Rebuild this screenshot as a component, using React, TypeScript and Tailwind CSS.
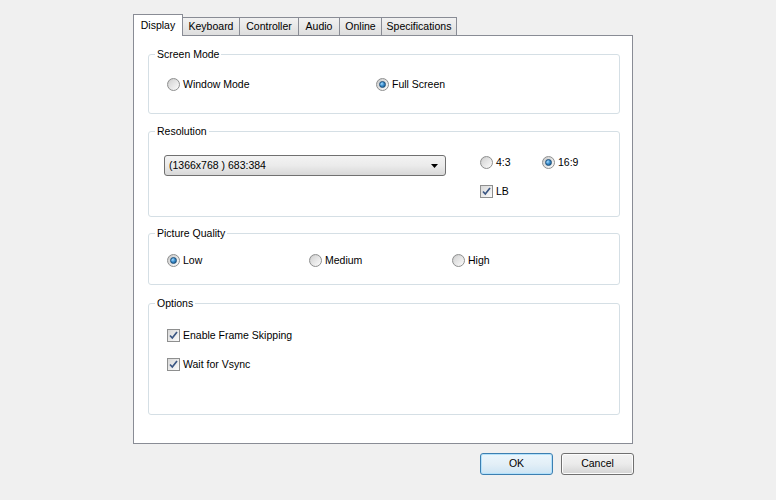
import React from "react";

const font = { fontFamily: '"Liberation Sans", Arial, sans-serif' };

function Radio({ checked }: { checked?: boolean }) {
  return (
    <span className="flex h-[13px] w-[13px] shrink-0 items-center justify-center rounded-full border border-[#8e8f8f] bg-gradient-to-br from-[#c8c8c8] to-[#ffffff]">
      {checked ? (
        <span className="h-[7px] w-[7px] rounded-full border border-[#1c4f7a] bg-[radial-gradient(circle_at_35%_35%,#a6dcff_0%,#3c8fcf_45%,#0f4c7c_100%)]" />
      ) : (
        <span className="h-[9px] w-[9px] rounded-full bg-gradient-to-br from-[#d4d4d4] to-[#f8f8f8]" />
      )}
    </span>
  );
}

function Check({ checked }: { checked?: boolean }) {
  return (
    <span className="flex h-[13px] w-[13px] shrink-0 items-center justify-center border border-[#8e8f8f] bg-white">
      <span className="relative flex h-[11px] w-[11px] items-center justify-center bg-gradient-to-br from-[#d8d8d8] to-[#fbfbfb]">
        {checked && (
          <svg width="9" height="9" viewBox="0 0 9 9" className="absolute left-[1px] top-[1px]">
            <path d="M1 4.5 L3.3 7 L8 1" fill="none" stroke="#3a5683" strokeWidth="1.7" />
          </svg>
        )}
      </span>
    </span>
  );
}

function Opt({ children, w, check, checked }: { children: React.ReactNode; w?: string; check?: boolean; checked?: boolean }) {
  return (
    <div className={`flex h-[16px] items-center gap-[3px] ${w ?? ""}`}>
      {check ? <Check checked={checked} /> : <Radio checked={checked} />}
      <span className="leading-none">{children}</span>
    </div>
  );
}

function Group({ title, className, children }: { title: string; className: string; children: React.ReactNode }) {
  return (
    <div className={`relative rounded-[3px] border border-[#d5dfe5] ${className}`}>
      <span className="absolute left-[6px] top-[-8px] bg-white px-[2px] leading-[14px]">{title}</span>
      {children}
    </div>
  );
}

const tabs = [
  { label: "Keyboard", w: "w-[57px]" },
  { label: "Controller", w: "w-[60px]" },
  { label: "Audio", w: "w-[42px]" },
  { label: "Online", w: "w-[43px]" },
  { label: "Specifications", w: "w-[76px]" },
];

export default function App() {
  return (
    <div className="h-[500px] w-[776px] bg-[#f0f0f0] pl-[133px] pt-[14px] text-[10.5px] text-black" style={font}>
      <div className="w-[501px]">
        <div className="relative z-10 -mb-px flex items-end">
          <div className="flex h-[22px] w-[50px] items-start justify-center border border-b-0 border-[#898c95] bg-white pt-[3px]">
            Display
          </div>
          {tabs.map((t, i) => (
            <div
              key={t.label}
              className={`flex h-[19px] ${t.w} items-center justify-center border border-[#898c95] bg-gradient-to-b from-[#f2f2f2] to-[#dedede] ${i === 0 ? "border-l-0" : "-ml-px"}`}
            >
              {t.label}
            </div>
          ))}
        </div>
        <div className="h-[409px] w-[500px] border border-[#898c95] bg-white pl-[14px] pr-[12px] pt-[18px]">
          <Group title="Screen Mode" className="h-[60px] pl-[18px] pt-[21px]">
            <div className="flex">
              <Opt w="w-[209px]">Window Mode</Opt>
              <Opt checked>Full Screen</Opt>
            </div>
          </Group>
          <Group title="Resolution" className="mt-[17px] h-[86px] pl-[15px] pt-[23px]">
            <div className="flex">
              <div className="flex h-[21px] w-[282px] items-center justify-between rounded-[3px] border border-[#707070] bg-gradient-to-b from-[#f3f3f3] via-[#ebebeb] to-[#d8d8d8] pl-[4px] pr-[7px]">
                <span>(1366x768 ) 683:384</span>
                <svg width="7" height="4" viewBox="0 0 7 4">
                  <path d="M0 0 H7 L3.5 4 Z" fill="#000" />
                </svg>
              </div>
              <div className="ml-[34px] flex flex-col gap-[13px]">
                <div className="-mt-[1px] flex">
                  <Opt w="w-[62px]">4:3</Opt>
                  <Opt checked>16:9</Opt>
                </div>
                <Opt check checked>LB</Opt>
              </div>
            </div>
          </Group>
          <Group title="Picture Quality" className="mt-[16px] h-[52px] pl-[18px] pt-[18px]">
            <div className="flex">
              <Opt w="w-[142px]" checked>Low</Opt>
              <Opt w="w-[143px]">Medium</Opt>
              <Opt>High</Opt>
            </div>
          </Group>
          <Group title="Options" className="mt-[18px] h-[112px] pl-[18px] pt-[23px]">
            <div className="flex flex-col gap-[13px]">
              <Opt check checked>Enable Frame Skipping</Opt>
              <Opt check checked>Wait for Vsync</Opt>
            </div>
          </Group>
        </div>
        <div className="mt-[9px] flex justify-end gap-[8px]">
          <button className="flex h-[22px] w-[73px] items-center justify-center rounded-[3px] border border-[#3c7fb1] bg-gradient-to-b from-[#eaf6fd] via-[#e3eff7] to-[#cde4f3] shadow-[inset_0_0_0_1px_#b3e1fb]">
            OK
          </button>
          <button className="flex h-[22px] w-[73px] items-center justify-center rounded-[3px] border border-[#707070] bg-gradient-to-b from-[#f2f2f2] via-[#ebebeb] to-[#d4d4d4] shadow-[inset_0_0_0_1px_#fcfcfc]">
            Cancel
          </button>
        </div>
      </div>
    </div>
  );
}
